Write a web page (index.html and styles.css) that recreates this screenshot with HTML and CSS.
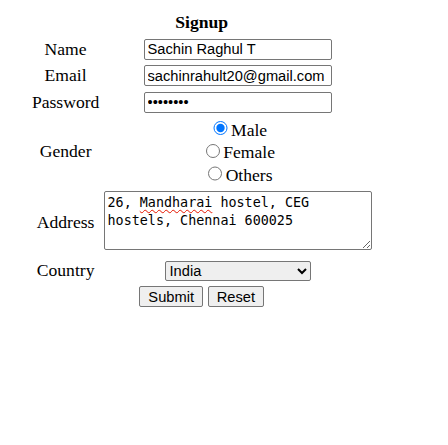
FILE: index.html
```html
<!DOCTYPE html>
<html>
<head>
<meta charset="utf-8">
<title>Signup</title>
<link rel="stylesheet" href="styles.css">
</head>
<body>
<form class="signup">
<table class="form-table">
<tr><th colspan="2" class="title">Signup</th></tr>
<tr><td class="label">Name</td><td class="field"><input class="text" type="text" value="Sachin Raghul T"></td></tr>
<tr><td class="label">Email</td><td class="field"><input class="text" type="text" value="sachinrahult20@gmail.com"></td></tr>
<tr><td class="label">Password</td><td class="field"><input class="text" type="password" value="sachinrt"></td></tr>
<tr><td class="label">Gender</td><td class="field radios"><input class="radio" type="radio" name="g" checked>Male<br><input class="radio" type="radio" name="g">Female<br><input class="radio" type="radio" name="g">Others</td></tr>
<tr><td class="label">Address</td><td class="field"><div class="address" contenteditable="true">26, <span class="typo">Mandharai</span> hostel, CEG<br>hostels, Chennai 600025</div></td></tr>
<tr><td class="label">Country</td><td class="field"><select class="country"><option>India</option><option>USA</option><option>UK</option></select></td></tr>
<tr><td colspan="2" class="actions"><button class="btn" type="button">Submit</button> <button class="btn" type="button">Reset</button></td></tr>
</table>
</form>
</body>
</html>
```
FILE: styles.css
```css
body {
  margin: 8.8px;
  font-family: "Liberation Serif", serif;
  font-size: 17.6px;
  color: #000;
  background: #fff;
}
.form-table {
  border-spacing: 2.2px;
  margin-left: 20px;
}
.form-table td, .form-table th {
  padding: 1.5px 1.1px;
  text-align: center;
}
.title {
  font-weight: bold;
}
.text {
  box-sizing: border-box;
  width: 188px;
  height: 21px;
  font-family: "Liberation Sans", sans-serif;
  font-size: 14.67px;
  padding: 1px 3px;
  margin: 0;
  border: 1px solid #767676;
  border-radius: 2px;
}
.radio {
  width: 14.3px;
  height: 14.3px;
  margin: 3.3px 3.3px 0 5.5px;
}
.address {
  display: inline-block;
  vertical-align: baseline;
  box-sizing: border-box;
  width: 268px;
  height: 59px;
  margin: 0;
  padding: 2.2px 3px;
  border: 1px solid #767676;
  border-radius: 2px;
  font-family: "DejaVu Sans Mono", monospace;
  font-size: 13.4px;
  line-height: 17.8px;
  text-align: left;
  resize: both;
  overflow: auto;
  outline: none;
}
.typo {
  text-decoration: underline wavy #e51400;
  text-decoration-thickness: 1px;
  text-underline-offset: 2px;
}
.country {
  box-sizing: border-box;
  width: 146px;
  height: 20px;
  font-family: "Liberation Sans", sans-serif;
  font-size: 14.67px;
  border: 1px solid #767676;
  border-radius: 2px;
  margin: 0;
}
.btn {
  box-sizing: border-box;
  height: 21px;
  font-family: "Liberation Sans", sans-serif;
  font-size: 14.67px;
  padding: 1px 8.2px;
  margin: 0;
  border: 1px solid #767676;
  border-radius: 2px;
  background: #efefef;
  color: #000;
}
```
